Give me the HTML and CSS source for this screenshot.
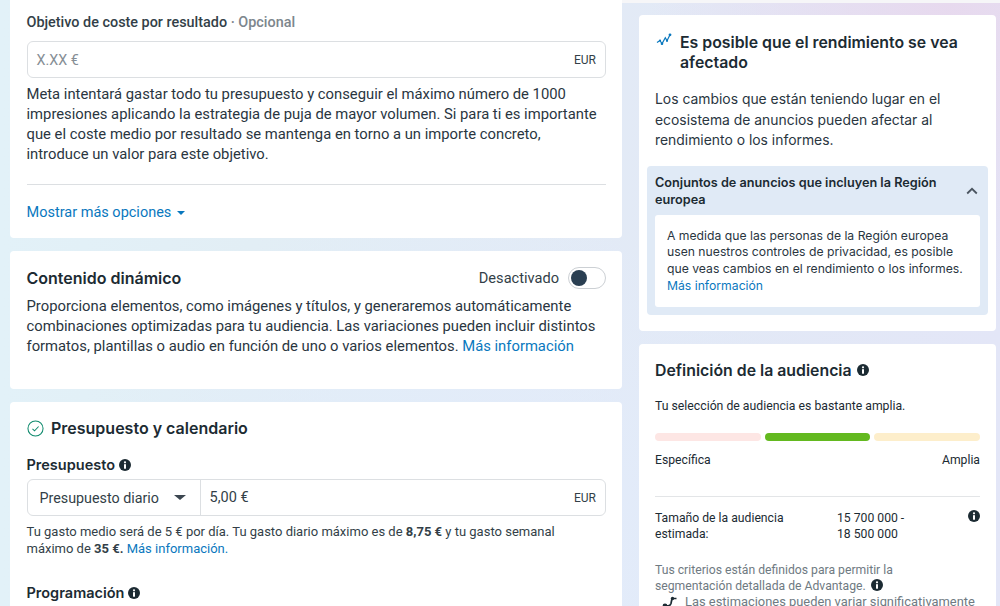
FILE: index.html
```html
<!DOCTYPE html>
<html lang="es">
<head>
  <meta charset="UTF-8" />
  <meta name="viewport" content="width=device-width, initial-scale=1">
  <title>Conjunto de anuncios</title>
  <link rel="stylesheet" href="styles.css">
</head>
<body>
  <div class="page">
    <div class="col-left">
      <section class="card card-top">
        <div class="field-label">Objetivo de coste por resultado <span class="optional">· Opcional</span></div>
        <div class="input-box">
          <span class="placeholder">X.XX €</span>
          <span class="currency">EUR</span>
        </div>
        <p class="body-text">Meta intentará gastar todo tu presupuesto y conseguir el máximo número de 1000 impresiones aplicando la estrategia de puja de mayor volumen. Si para ti es importante que el coste medio por resultado se mantenga en torno a un importe concreto, introduce un valor para este objetivo.</p>
        <hr class="divider">
        <a class="link more-options">Mostrar más opciones <span class="caret"></span></a>
      </section>

      <section class="card card-dynamic">
        <div class="dynamic-head">
          <h3>Contenido dinámico</h3>
          <div class="toggle-wrap">
            <span>Desactivado</span>
            <span class="toggle"><span class="knob"></span></span>
          </div>
        </div>
        <p class="body-text">Proporciona elementos, como imágenes y títulos, y generaremos automáticamente combinaciones optimizadas para tu audiencia. Las variaciones pueden incluir distintos formatos, plantillas o audio en función de uno o varios elementos. <a class="link">Más información</a></p>
      </section>

      <section class="card card-budget">
        <div class="budget-head">
          <svg class="check" width="17" height="17" viewBox="0 0 18 18" fill="none">
            <circle cx="9" cy="9" r="8" stroke="#0f8a6d" stroke-width="1.1"/>
            <path d="M5.800 9.300l2.200 2.200 4.300-4.600" stroke="#0f8a6d" stroke-width="1.1"/>
          </svg>
          <h3>Presupuesto y calendario</h3>
        </div>
        <div class="sub-label">Presupuesto
          <svg class="info" viewBox="0 0 12 12"><use href="#info-icon"/></svg>
        </div>
        <div class="input-box budget-box">
          <div class="budget-select">
            <span>Presupuesto diario</span>
            <span class="caret caret-dark"></span>
          </div>
          <div class="budget-value">
            <span>5,00 €</span>
            <span class="currency">EUR</span>
          </div>
        </div>
        <p class="small-text">Tu gasto medio será de 5 € por día. Tu gasto diario máximo es de <b>8,75 €</b> y tu gasto semanal máximo de <b>35 €.</b> <a class="link">Más información.</a></p>
        <div class="sub-label schedule">Programación
          <svg class="info" viewBox="0 0 12 12"><use href="#info-icon"/></svg>
        </div>
      </section>
    </div>

    <div class="col-right">
      <section class="card side-card perf-card">
        <div class="perf-head">
          <svg class="perf-icon" width="16" height="14" viewBox="0 0 16 14" fill="none">
            <path d="M1 9.500l3-2 2 3.300 3.300-6 1.700 3 3-6" stroke="#0a78be" stroke-width="1.200"/>
            <circle cx="4" cy="7.500" r="1.100" fill="#0a78be"/>
            <circle cx="6" cy="10.800" r="1.300" fill="#0a78be"/>
            <circle cx="11" cy="7.800" r="1.100" fill="#0a78be"/>
            <circle cx="14" cy="1.800" r="1.400" fill="#0a78be"/>
          </svg>
          <h3>Es posible que el rendimiento se vea afectado</h3>
        </div>
        <p class="side-text">Los cambios que están teniendo lugar en el ecosistema de anuncios pueden afectar al rendimiento o los informes.</p>
        <div class="notice">
          <div class="notice-head">
            <b>Conjuntos de anuncios que incluyen la Región europea</b>
            <svg class="chevron" width="12" height="8" viewBox="0 0 12 8" fill="none">
              <path d="M1.200 6.500L6 1.800l4.800 4.700" stroke="#4b5560" stroke-width="1.800"/>
            </svg>
          </div>
          <div class="notice-body">A medida que las personas de la Región europea usen nuestros controles de privacidad, es posible que veas cambios en el rendimiento o los informes. <a class="link">Más información</a></div>
        </div>
      </section>

      <section class="card side-card audience-card">
        <div class="aud-title">
          <h3>Definición de la audiencia</h3>
          <svg class="info" viewBox="0 0 12 12"><use href="#info-icon"/></svg>
        </div>
        <p class="aud-line">Tu selección de audiencia es bastante amplia.</p>
        <div class="meter">
          <span class="seg seg-red"></span>
          <span class="seg seg-green"></span>
          <span class="seg seg-yellow"></span>
        </div>
        <div class="meter-labels"><span>Específica</span><span>Amplia</span></div>
        <hr class="divider aud-divider">
        <div class="size-row">
          <span class="size-name">Tamaño de la audiencia estimada:</span>
          <span class="size-value">15 700 000 - 18 500 000</span>
          <svg class="info" viewBox="0 0 12 12"><use href="#info-icon"/></svg>
        </div>
        <p class="aud-note">Tus criterios están definidos para permitir la segmentación detallada de Advantage.
          <svg class="info" viewBox="0 0 12 12"><use href="#info-icon"/></svg>
        </p>
        <div class="estimate">
          <svg width="16" height="14" viewBox="0 0 16 14" fill="none">
            <path d="M3 10.500c3 1 5 .5 6-2L10 3.500" stroke="#1c2b33" stroke-width="1.700"/>
            <circle cx="3" cy="11" r="2.400" fill="#1c2b33"/>
            <circle cx="10.500" cy="3.500" r="1.700" fill="#1c2b33"/>
            <path d="M10.500 3.500h4" stroke="#1c2b33" stroke-width="1.500"/>
          </svg>
          <span>Las estimaciones pueden variar significativamente</span>
        </div>
      </section>
    </div>
  </div>

  <svg class="icon-defs" width="0" height="0">
    <symbol id="info-icon" viewBox="0 0 12 12">
      <circle cx="6" cy="6" r="6" fill="#1c2b33"/>
      <circle cx="6" cy="3.300" r="1.100" fill="#fff"/>
      <rect x="5" y="5.200" width="2" height="4.500" fill="#fff"/>
    </symbol>
  </svg>
</body>
</html>
```

FILE: styles.css
```css
*, *::before, *::after { box-sizing: border-box; }
html, body { height: 100%; }
body {
  margin: 0;
  overflow: hidden;
  font-family: 'Roboto', 'Liberation Sans', sans-serif;
  font-size: 14px;
  color: #1c2b33;
  background:
    radial-gradient(circle at 95% 0, #e7d9ee 0, rgba(231,217,238,0) 300px),
    radial-gradient(circle at 45% 100%, #e2ecfc 0, rgba(226,236,252,0) 420px),
    linear-gradient(90deg, #e2f1f8 0%, #e2eef5 25%, #e3e6f7 100%);
}
h3, p { margin: 0; }
hr { border: none; }

.page {
  display: flex;
  height: 606px;
  padding-left: 10px;
  overflow: hidden;
}
.col-left { width: 612px; display: flex; flex-direction: column; gap: 13px; flex: none; }
.col-right {
  width: 378px;
  display: flex;
  flex-direction: column;
  gap: 13px;
  flex: none;
  padding: 15px 4px 0 17px;
  background: linear-gradient(#f6f6f8 3px, transparent 3px);
}

.card { background: #fff; border-radius: 4px; }
.link { color: #0a78be; }
.icon-defs { position: absolute; }

/* tarjetas izquierda */
.card-top { height: 238px; padding: 15px 16px 0 16.500px; border-radius: 0 0 4px 4px; flex: none; }
.field-label { font-size: 14.400px; font-weight: 500; line-height: 16px; color: #333f48; }
.optional { color: #7d868d; }
.input-box {
  display: flex;
  justify-content: space-between;
  align-items: center;
  height: 37px;
  margin-top: 10px;
  padding: 0 9px;
  border: 1px solid #dcdfe2;
  border-radius: 6px;
  background: #fff;
}
.placeholder { color: #868e95; font-size: 14.300px; }
.currency { font-size: 12px; color: #333f48; }
.body-text { font-size: 14.800px; line-height: 20px; color: #2a363f; }
.input-box + .body-text { margin-top: 6px; }
.divider { height: 1px; background: #dcdfe2; margin: 20px 0 0; }
.more-options { display: block; margin-top: 19px; font-size: 14.500px; line-height: 18px; }
.caret {
  display: inline-block;
  width: 0; height: 0;
  margin-left: 2px;
  vertical-align: 2px;
  border-left: 4px solid transparent;
  border-right: 4px solid transparent;
  border-top: 4px solid #0a78be;
}
.caret-dark {
  border-left-width: 6px;
  border-right-width: 6px;
  border-top: 5px solid #3b4650;
  margin: 0;
  vertical-align: middle;
}

.card-dynamic { height: 138px; padding: 15px 16px 0 16.500px; flex: none; }
.dynamic-head { display: flex; justify-content: space-between; align-items: center; height: 24px; margin-bottom: 6px; }
.dynamic-head h3 { font-family: 'Inter', sans-serif; font-size: 16px; font-weight: 600; }
.toggle-wrap { display: flex; align-items: center; gap: 9px; font-size: 14.600px; color: #333f48; }
.toggle {
  display: flex;
  align-items: center;
  width: 38px;
  height: 22px;
  padding-left: 2px;
  border: 1px solid #ccd0d4;
  border-radius: 11px;
}
.knob { width: 16px; height: 16px; border-radius: 50%; background: #2a3f52; }

.card-budget { flex: 1; padding: 16px 16px 0 16.500px; border-radius: 4px 4px 0 0; }
.budget-head { display: flex; align-items: center; gap: 7.500px; height: 20px; }
.budget-head h3 { font-family: 'Inter', sans-serif; font-size: 16px; font-weight: 600; }
.sub-label { display: flex; align-items: center; gap: 4px; margin-top: 17px; font-family: 'Inter', sans-serif; font-size: 14.500px; font-weight: 600; line-height: 20px; }
.info { width: 12px; height: 12px; flex: none; }
.budget-box { padding: 0; margin-top: 4px; }
.budget-select {
  display: flex;
  align-items: center;
  justify-content: space-between;
  width: 173px;
  height: 100%;
  padding: 0 14px 0 12px;
  border-right: 1px solid #dcdfe2;
  font-size: 14.300px;
  color: #333f48;
}
.budget-value { flex: 1; display: flex; justify-content: space-between; align-items: center; padding: 0 9px; font-size: 14.500px; color: #333f48; }
.small-text { max-width: 545px; margin-top: 7px; font-size: 13px; line-height: 17px; color: #333f48; }
.small-text b { font-weight: 700; }
.schedule { margin-top: 26px; }

/* columna derecha */
.side-card { padding: 0 16px; }
.perf-card { height: 316px; flex: none; padding: 18px 8px 0 8px; }
.perf-head { display: flex; gap: 8px; padding-left: 9px; }
.perf-head h3 { width: 300px; font-family: 'Inter', sans-serif; font-size: 15.850px; font-weight: 600; line-height: 20px; }
.perf-icon { flex: none; }
.side-text { margin-top: 16px; padding: 0 8px; font-family: 'Inter', sans-serif; font-size: 13.900px; line-height: 20.500px; color: #2a363f; }
.notice { margin-top: 15px; padding: 8px; border-radius: 4px; background: #e0eaf6; }
.notice-head { display: flex; justify-content: space-between; align-items: center; padding-right: 2px; font-family: 'Inter', sans-serif; font-size: 12.700px; line-height: 17px; }
.notice-head b { width: 295px; font-weight: 600; }
.notice-body {
  margin-top: 7px;
  padding: 13px 12px;
  border-radius: 3px;
  background: #fff;
  font-family: 'Inter', sans-serif;
  font-size: 12.200px;
  line-height: 16.700px;
  color: #2a363f;
}

.audience-card { flex: 1; padding-top: 15px; border-radius: 4px 4px 0 0; }
.aud-title { display: flex; align-items: center; gap: 5px; height: 22px; }
.aud-title h3 { font-family: 'Inter', sans-serif; font-size: 15.850px; font-weight: 600; }
.aud-line { margin-top: 17px; font-size: 12.250px; line-height: 16px; }
.meter { display: flex; gap: 4px; margin-top: 19px; }
.seg { flex: 1; height: 8px; border-radius: 4px; }
.seg-red { background: #fde6e4; }
.seg-green { background: #63b91f; }
.seg-yellow { background: #fdeecb; }
.meter-labels { display: flex; justify-content: space-between; margin-top: 11px; font-size: 12.200px; line-height: 16px; }
.aud-divider { margin-top: 28px; background: #e3e5e7; }
.size-row { display: flex; margin-top: 13px; font-size: 12.200px; line-height: 16px; }
.size-name { width: 182px; flex: none; padding-right: 30px; }
.size-value { flex: 1; padding-right: 60px; }
.aud-note { max-width: 270px; margin-top: 20px; font-size: 12.200px; line-height: 16px; color: #6f7a82; }
.aud-note .info { vertical-align: -1px; margin-left: 2px; }
.estimate { display: flex; align-items: center; gap: 7px; padding-left: 7px; font-size: 12.900px; line-height: 16px; color: #6f7a82; white-space: nowrap; }
```
